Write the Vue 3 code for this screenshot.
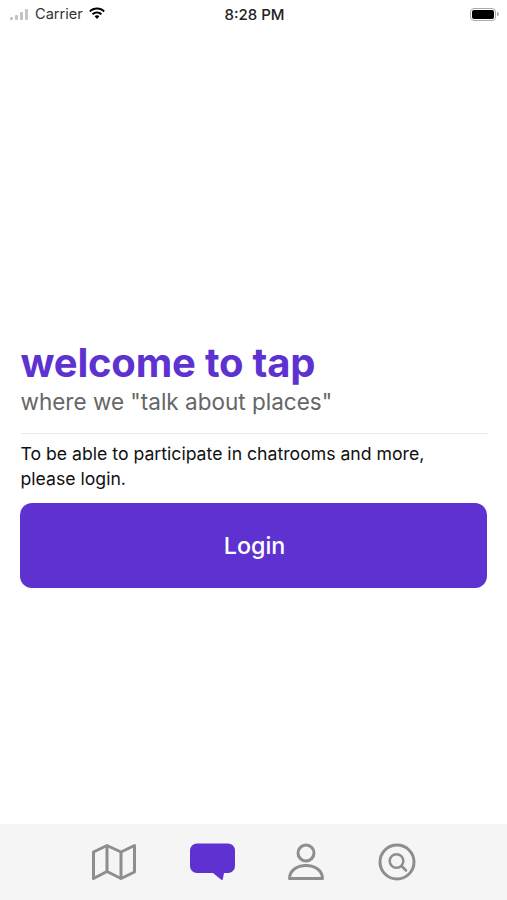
<template>
  <div class="screen">
    <div class="status-bar">
      <div class="status-left">
        <div class="signal">
          <span class="s1"></span><span class="s2"></span><span class="s3"></span><span class="s4"></span>
        </div>
        <span class="carrier">Carrier</span>
        <svg class="wifi" viewBox="0 0 18 13">
          <path fill="#000" d="M9 2.6c2.5 0 4.8 1 6.5 2.6l1.3-1.4C14.8 1.800 12 .6 9 .6S3.200 1.800 1.200 3.800l1.300 1.400C4.200 3.600 6.500 2.600 9 2.600z"/>
          <path fill="#000" d="M9 6.400c1.500 0 2.800.6 3.800 1.500l1.300-1.400C12.800 5.200 11 4.500 9 4.500s-3.800.7-5.100 2l1.300 1.400c1-.9 2.300-1.500 3.800-1.500z"/>
          <path fill="#000" d="M9 8.300c-1 0-1.800.4-2.400 1L9 12l2.400-2.700c-.6-.6-1.400-1-2.400-1z"/>
        </svg>
      </div>
      <span class="time">8:28 PM</span>
      <div class="battery">
        <div class="battery-body"><div class="battery-fill"></div></div>
        <div class="battery-cap"></div>
      </div>
    </div>

    <main class="content">
      <h1 class="title">welcome to tap</h1>
      <p class="subtitle">where we "talk about places"</p>
      <div class="divider"></div>
      <p class="message">To be able to participate in chatrooms and more,<br>please login.</p>
      <button class="login-btn">Login</button>
    </main>

    <nav class="tab-bar">
      <svg class="tab-icon" width="45" height="38" viewBox="0 0 45 38">
        <path fill="none" stroke="#8e8e8e" stroke-width="3" stroke-linejoin="round" d="M2.500 9 16 2.500 30 9l13.500-6.500V29L30 35.500 16 28.500 2.500 35.500z"/>
        <path fill="none" stroke="#8e8e8e" stroke-width="3" d="M16 2.500v26M30 9v26.500"/>
      </svg>
      <svg class="tab-icon chat" width="45" height="38" viewBox="0 0 45 38">
        <path fill="#5d32d0" d="M7 .5h31a7 7 0 0 1 7 7V23a7 7 0 0 1-7 7h-4l-1.200 6.300q-.3 1.200-1.500.5L23 30H7a7 7 0 0 1-7-7V7.500a7 7 0 0 1 7-7z"/>
      </svg>
      <svg class="tab-icon person" width="38" height="38" viewBox="0 0 38 38">
        <circle cx="19" cy="10" r="8" fill="none" stroke="#8e8e8e" stroke-width="3"/>
        <path fill="none" stroke="#8e8e8e" stroke-width="3" stroke-linejoin="round" d="M2.500 35.500C2.500 27.500 10 22.500 19 22.500s16.500 5 16.500 13z"/>
      </svg>
      <svg class="tab-icon" width="38" height="38" viewBox="0 0 38 38">
        <circle cx="19" cy="19" r="17" fill="none" stroke="#8e8e8e" stroke-width="3"/>
        <circle cx="18.500" cy="18" r="6.800" fill="none" stroke="#8e8e8e" stroke-width="2.500"/>
        <path fill="none" stroke="#8e8e8e" stroke-width="2.500" stroke-linecap="round" d="m23.500 23 4.500 4.500"/>
      </svg>
    </nav>
  </div>
</template>

<script setup>
</script>

<style>
html, body { margin: 0; padding: 0; background: #fff; }
</style>

<style scoped>
.screen {
  width: 507px;
  height: 900px;
  display: flex;
  flex-direction: column;
  background: #fff;
  font-family: Inter, "Liberation Sans", sans-serif;
  overflow: hidden;
}

.status-bar {
  height: 28px;
  display: grid;
  grid-template-columns: 1fr auto 1fr;
  align-items: center;
  padding: 0 8px 0 10px;
  color: #111;
  font-size: 14px;
}

.status-left {
  display: flex;
  align-items: center;
  gap: 5px;
}

.signal {
  display: flex;
  align-items: flex-end;
  gap: 2px;
  height: 11px;
  margin-right: 2px;
}
.signal span { width: 3px; background: #c4c4c4; border-radius: 1px; }
.s1 { height: 3px; }
.s2 { height: 5px; }
.s3 { height: 8px; }
.s4 { height: 11px; }

.carrier { color: #333; font-size: 14.6px; }

.wifi { width: 18px; height: 13px; margin-bottom: 2px; }

.time { font-weight: 500; font-size: 15px; color: #222; }

.battery {
  justify-self: end;
  display: flex;
  align-items: center;
  gap: 1px;
}
.battery-body {
  width: 26px;
  height: 13px;
  box-sizing: border-box;
  border: 1.500px solid #aaa;
  border-radius: 4px;
  padding: 1px;
}
.battery-fill { width: 100%; height: 100%; background: #000; border-radius: 2px; }
.battery-cap { width: 2px; height: 4px; background: #aaa; border-radius: 0 2px 2px 0; }

.content {
  flex: 1;
  display: flex;
  flex-direction: column;
  justify-content: flex-end;
  padding: 0 19.500px 236px 20.500px;
}

.title {
  margin: 0 0 3px;
  font-size: 40px;
  line-height: 44px;
  font-weight: 700;
  color: #5d32d0;
  letter-spacing: -0.2px;
}

.subtitle {
  margin: 0;
  font-size: 22.500px;
  line-height: 28px;
  color: #666;
}

.divider {
  height: 1px;
  background: #e8e8e8;
  margin: 17px 0 7px;
}

.message {
  margin: 0;
  font-size: 17.650px;
  line-height: 25px;
  color: #111;
}

.login-btn {
  margin: 12px 0.5px 0 -0.5px;
  height: 85px;
  padding: 0 0 0 2px;
  border: none;
  border-radius: 12px;
  background: #5d32d0;
  color: #fff;
  font-family: inherit;
  font-size: 23.300px;
  font-weight: 500;
}

.tab-bar {
  height: 76px;
  box-sizing: border-box;
  background: #f5f5f5;
  display: flex;
  justify-content: center;
  align-items: flex-start;
  gap: 53px;
  padding-top: 19px;
}

.tab-icon { flex-shrink: 0; }
.chat { margin-left: 1px; }
.person { margin-left: -1px; }
</style>
